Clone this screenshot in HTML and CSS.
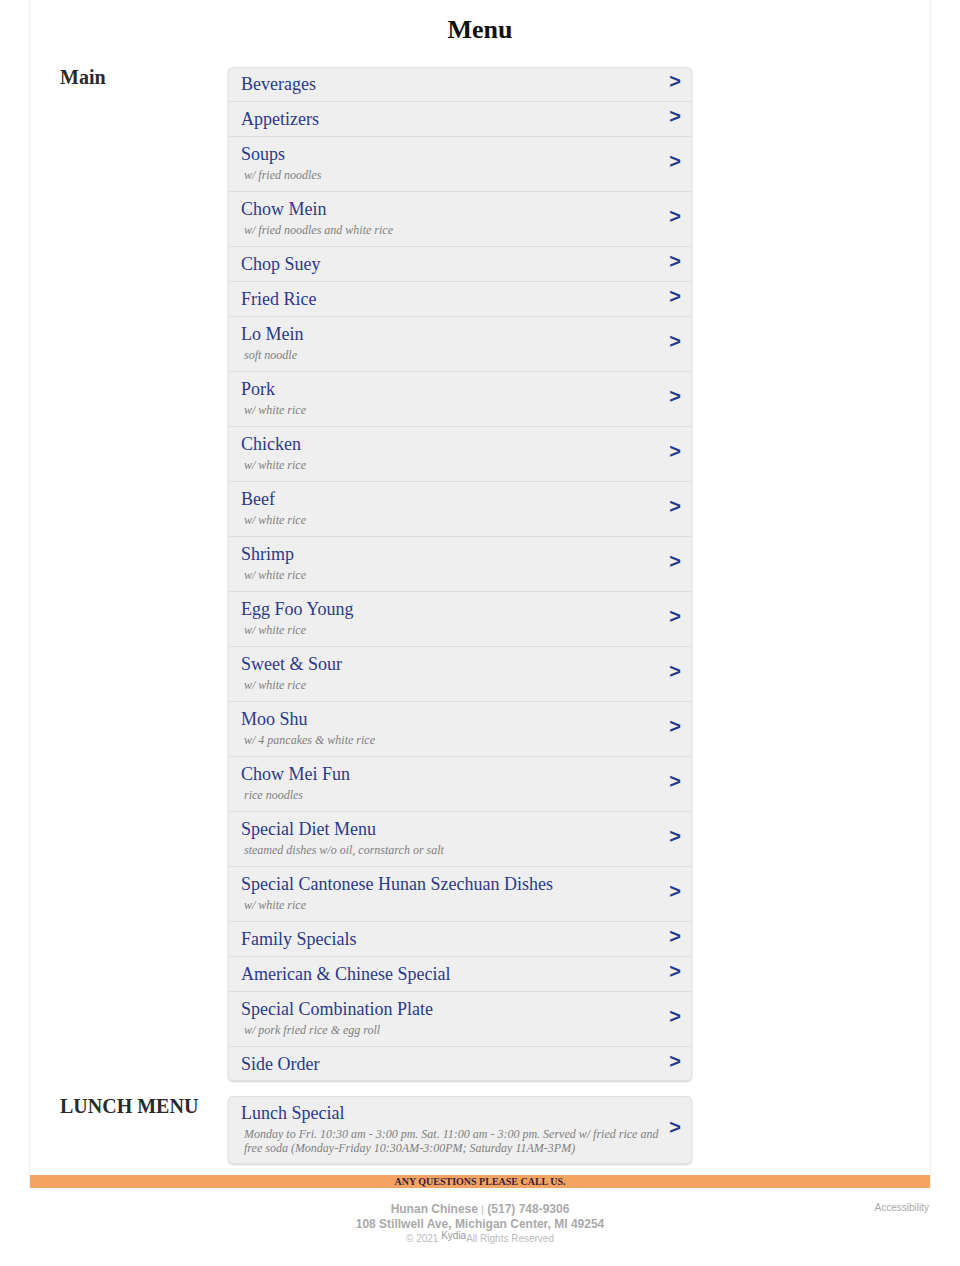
FILE: index.html
```html
<!DOCTYPE html>
<html lang="en">
<head>
<meta charset="utf-8">
<title>Menu</title>
<link rel="stylesheet" href="styles.css">
</head>
<body>
<div class="page">
  <h1 class="page-title">Menu</h1>

  <section class="menu-section">
    <h2 class="section-label">Main</h2>
    <ul class="menu-list">
      <li class="menu-item"><div class="item-text"><div class="item-title">Beverages</div></div><span class="arrow">&gt;</span></li>
      <li class="menu-item"><div class="item-text"><div class="item-title">Appetizers</div></div><span class="arrow">&gt;</span></li>
      <li class="menu-item"><div class="item-text"><div class="item-title">Soups</div><div class="item-sub">w/ fried noodles</div></div><span class="arrow">&gt;</span></li>
      <li class="menu-item"><div class="item-text"><div class="item-title">Chow Mein</div><div class="item-sub">w/ fried noodles and white rice</div></div><span class="arrow">&gt;</span></li>
      <li class="menu-item"><div class="item-text"><div class="item-title">Chop Suey</div></div><span class="arrow">&gt;</span></li>
      <li class="menu-item"><div class="item-text"><div class="item-title">Fried Rice</div></div><span class="arrow">&gt;</span></li>
      <li class="menu-item"><div class="item-text"><div class="item-title">Lo Mein</div><div class="item-sub">soft noodle</div></div><span class="arrow">&gt;</span></li>
      <li class="menu-item"><div class="item-text"><div class="item-title">Pork</div><div class="item-sub">w/ white rice</div></div><span class="arrow">&gt;</span></li>
      <li class="menu-item"><div class="item-text"><div class="item-title">Chicken</div><div class="item-sub">w/ white rice</div></div><span class="arrow">&gt;</span></li>
      <li class="menu-item"><div class="item-text"><div class="item-title">Beef</div><div class="item-sub">w/ white rice</div></div><span class="arrow">&gt;</span></li>
      <li class="menu-item"><div class="item-text"><div class="item-title">Shrimp</div><div class="item-sub">w/ white rice</div></div><span class="arrow">&gt;</span></li>
      <li class="menu-item"><div class="item-text"><div class="item-title">Egg Foo Young</div><div class="item-sub">w/ white rice</div></div><span class="arrow">&gt;</span></li>
      <li class="menu-item"><div class="item-text"><div class="item-title">Sweet &amp; Sour</div><div class="item-sub">w/ white rice</div></div><span class="arrow">&gt;</span></li>
      <li class="menu-item"><div class="item-text"><div class="item-title">Moo Shu</div><div class="item-sub">w/ 4 pancakes &amp; white rice</div></div><span class="arrow">&gt;</span></li>
      <li class="menu-item"><div class="item-text"><div class="item-title">Chow Mei Fun</div><div class="item-sub">rice noodles</div></div><span class="arrow">&gt;</span></li>
      <li class="menu-item"><div class="item-text"><div class="item-title">Special Diet Menu</div><div class="item-sub">steamed dishes w/o oil, cornstarch or salt</div></div><span class="arrow">&gt;</span></li>
      <li class="menu-item"><div class="item-text"><div class="item-title">Special Cantonese Hunan Szechuan Dishes</div><div class="item-sub">w/ white rice</div></div><span class="arrow">&gt;</span></li>
      <li class="menu-item"><div class="item-text"><div class="item-title">Family Specials</div></div><span class="arrow">&gt;</span></li>
      <li class="menu-item"><div class="item-text"><div class="item-title">American &amp; Chinese Special</div></div><span class="arrow">&gt;</span></li>
      <li class="menu-item"><div class="item-text"><div class="item-title">Special Combination Plate</div><div class="item-sub">w/ pork fried rice &amp; egg roll</div></div><span class="arrow">&gt;</span></li>
      <li class="menu-item"><div class="item-text"><div class="item-title">Side Order</div></div><span class="arrow">&gt;</span></li>
    </ul>
  </section>

  <section class="menu-section">
    <h2 class="section-label">LUNCH MENU</h2>
    <ul class="menu-list">
      <li class="menu-item"><div class="item-text"><div class="item-title">Lunch Special</div><div class="item-sub">Monday to Fri. 10:30 am - 3:00 pm. Sat. 11:00 am - 3:00 pm. Served w/ fried rice and free soda (Monday-Friday 10:30AM-3:00PM; Saturday 11AM-3PM)</div></div><span class="arrow">&gt;</span></li>
    </ul>
  </section>

  <div class="call-bar">ANY QUESTIONS PLEASE CALL US.</div>
</div>

<footer class="site-footer">
  <div class="footer-spacer"></div>
  <div class="footer-info">
    <div class="footer-line"><span class="strong">Hunan Chinese</span> <span class="sep">|</span> <span class="strong">(517) 748-9306</span></div>
    <div class="footer-line strong">108 Stillwell Ave, Michigan Center, MI 49254</div>
    <div class="footer-copy">© 2021 <span class="brand">Kydia</span>All Rights Reserved</div>
  </div>
  <div class="footer-access">Accessibility</div>
</footer>
</body>
</html>
```

FILE: styles.css
```css
* { box-sizing: border-box; }

body {
  margin: 0;
  background: #ffffff;
  font-family: "Liberation Serif", "Times New Roman", serif;
  color: #222;
}

.page {
  width: 902px;
  margin: 0 auto;
  border-left: 1px solid #f1f1f1;
  border-right: 1px solid #f1f1f1;
}

.page-title {
  margin: 0 0 22px;
  padding-top: 15px;
  font-size: 26px;
  line-height: 30px;
  font-weight: bold;
  text-align: center;
  color: #111;
}

.menu-section {
  display: flex;
  align-items: flex-start;
  padding-left: 30px;
  margin-bottom: 15px;
}

.section-label {
  width: 168px;
  flex: none;
  margin: 0;
  font-size: 20px;
  line-height: 20px;
  font-weight: bold;
  color: #2a2a2a;
}

.menu-list {
  list-style: none;
  margin: 0;
  padding: 0;
  width: 464px;
  background: #efefef;
  border: 1px solid #e2e2e2;
  border-radius: 5px;
  box-shadow: 0 1px 2px rgba(0, 0, 0, 0.18);
}

.menu-item {
  display: flex;
  align-items: center;
  padding: 6px 10px 6px 12px;
  border-bottom: 1px solid #dcdcdc;
}

.menu-item:first-child { padding-top: 5px; }

.menu-item:last-child {
  border-bottom: none;
  padding-bottom: 5px;
}

.item-text {
  flex: 1;
  min-width: 0;
}

.item-title {
  font-size: 18px;
  line-height: 22px;
  color: #2b3a8a;
}

.item-sub {
  font-size: 12px;
  line-height: 14px;
  padding: 3px 0 3px 3px;
  font-style: italic;
  color: #808080;
}

.arrow {
  flex: none;
  margin-bottom: 6px;
  font-family: "Liberation Sans", Arial, sans-serif;
  font-weight: bold;
  font-size: 20px;
  line-height: 16px;
  color: #26388c;
}

.call-bar {
  margin-top: -4px;
  background: #f4a461;
  text-align: center;
  font-size: 10px;
  line-height: 13px;
  font-weight: bold;
  color: #3a1c3c;
}

.site-footer {
  width: 900px;
  margin: 0 auto;
  padding-top: 14px;
  display: grid;
  grid-template-columns: 1fr auto 1fr;
  font-family: "Liberation Sans", Arial, sans-serif;
  color: #aaaaaa;
}

.footer-info { text-align: center; }

.footer-line {
  font-size: 12px;
  line-height: 14px;
}

.strong { font-weight: bold; }

.sep {
  font-size: 10px;
  color: #b8b8b8;
}

.footer-copy {
  margin-top: 2px;
  font-size: 10px;
  line-height: 12px;
  color: #bbbbbb;
}

.brand {
  position: relative;
  top: -3px;
  color: #999999;
}

.footer-access {
  justify-self: end;
  padding-right: 1px;
  font-size: 10px;
  line-height: 12px;
  color: #aaaaaa;
}
```
